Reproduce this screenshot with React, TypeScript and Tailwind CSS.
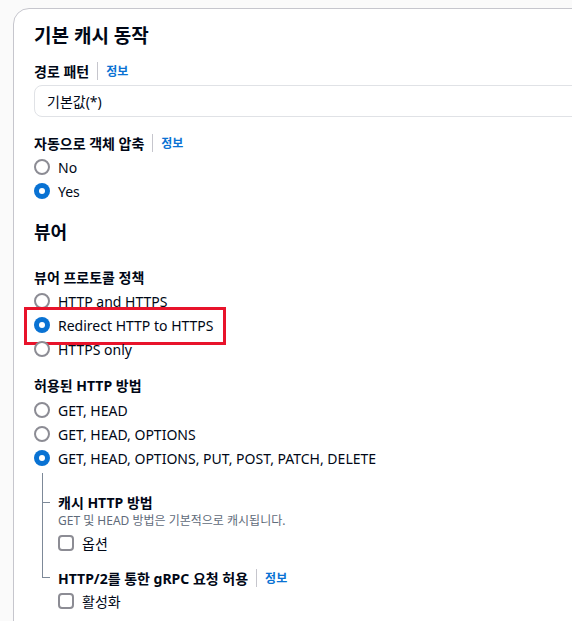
import React from "react";

const FONT = { fontFamily: '"Noto Sans", "Noto Sans CJK KR", sans-serif' };

function Radio({ checked, label, rel }: { checked?: boolean; label: string; rel?: React.ReactNode }) {
  return (
    <div className="relative flex h-[24px] items-center gap-[8px]">
      {checked ? (
        <span className="flex h-[16px] w-[16px] items-center justify-center rounded-full bg-[#0972d3]">
          <span className="h-[6px] w-[6px] rounded-full bg-white" />
        </span>
      ) : (
        <span className="h-[16px] w-[16px] rounded-full border-2 border-[#8c8c94] bg-white" />
      )}
      <span className="text-[14px] text-[#000716]">{label}</span>
      {rel}
    </div>
  );
}

function Checkbox({ label }: { label: string }) {
  return (
    <div className="flex h-[24px] items-center gap-[8px]">
      <span className="h-[16px] w-[16px] rounded-[4px] border-2 border-[#8c8c94] bg-white" />
      <span className="text-[14px] text-[#000716]">{label}</span>
    </div>
  );
}

function Label({ text, info }: { text: string; info?: boolean }) {
  return (
    <div className="flex h-[22px] items-center">
      <span className="text-[14px] font-bold text-[#000716]">{text}</span>
      {info && (
        <>
          <span className="mx-[8px] h-[18px] w-px bg-[#c6c6cd]" />
          <span className="pt-px text-[12px] font-bold text-[#0972d3]">정보</span>
        </>
      )}
    </div>
  );
}

export default function App() {
  return (
    <div className="h-[621px] w-full overflow-hidden bg-[#fafafa]" style={FONT}>
      <div className="ml-[13px] mt-[8px] h-[700px] w-[600px] rounded-tl-[16px] border border-[#c6c6cd] bg-white pl-[20px] pt-[15px]">
        <div className="flex h-[24px] items-center text-[19px] font-bold text-[#000716]">기본 캐시 동작</div>

        <div className="mt-[12px]">
          <Label text="경로 패턴" info />
        </div>
        <div className="mt-[3px] flex h-[32px] w-[560px] items-center rounded-[8px] border border-[#e0e2e6] px-[12px] text-[14px] text-[#000716]">
          기본값(*)
        </div>

        <div className="mt-[15px]">
          <Label text="자동으로 객체 압축" info />
        </div>
        <div className="mt-[1px] flex flex-col">
          <Radio label="No" />
          <Radio label="Yes" checked />
        </div>

        <div className="mt-[17px] flex h-[24px] items-center text-[18px] font-bold text-[#000716]">뷰어</div>

        <div className="mt-[22px]">
          <Label text="뷰어 프로토콜 정책" />
        </div>
        <div className="mt-[1px] flex flex-col">
          <Radio label="HTTP and HTTPS" />
          <Radio
            label="Redirect HTTP to HTTPS"
            checked
            rel={<span className="pointer-events-none absolute left-[-10px] top-[-6px] h-[38px] w-[202px] border-[3px] border-[#e8132b]" />}
          />
          <Radio label="HTTPS only" />
        </div>

        <div className="mt-[13px]">
          <Label text="허용된 HTTP 방법" />
        </div>
        <div className="mt-[2px] flex flex-col">
          <Radio label="GET, HEAD" />
          <Radio label="GET, HEAD, OPTIONS" />
          <Radio label="GET, HEAD, OPTIONS, PUT, POST, PATCH, DELETE" checked />
        </div>

        <div className="mt-[3px] flex">
          <div className="ml-[8px] flex w-[8px] flex-col">
            <div className="h-[30px] border-b border-l border-[#7d8998]" />
            <div className="h-[75px] border-b border-l border-[#7d8998]" />
          </div>
          <div className="ml-[8px] flex flex-col pt-[18px]">
            <Label text="캐시 HTTP 방법" />
            <div className="flex h-[16px] items-center text-[12px] text-[#5f6b7a]">GET 및 HEAD 방법은 기본적으로 캐시됩니다.</div>
            <div className="mt-[2px]">
              <Checkbox label="옵션" />
            </div>
            <div className="mt-[12px]">
              <Label text="HTTP/2를 통한 gRPC 요청 허용" info />
            </div>
            <Checkbox label="활성화" />
          </div>
        </div>
      </div>
    </div>
  );
}
